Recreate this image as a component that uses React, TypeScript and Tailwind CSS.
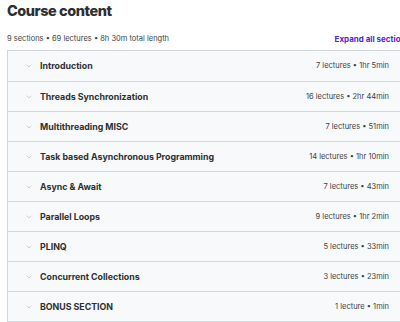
import { ChevronDown } from 'lucide-react';

const sections = [
  { title: 'Introduction', meta: '7 lectures • 1hr 5min' },
  { title: 'Threads Synchronization', meta: '16 lectures • 2hr 44min' },
  { title: 'Multithreading MISC', meta: '7 lectures • 51min' },
  { title: 'Task based Asynchronous Programming', meta: '14 lectures • 1hr 10min' },
  { title: 'Async & Await', meta: '7 lectures • 43min' },
  { title: 'Parallel Loops', meta: '9 lectures • 1hr 2min' },
  { title: 'PLINQ', meta: '5 lectures • 33min' },
  { title: 'Concurrent Collections', meta: '3 lectures • 23min' },
  { title: 'BONUS SECTION', meta: '1 lecture • 1min' },
];

export default function App() {
  return (
    <div className="w-[400px] h-[322px] overflow-hidden bg-white text-[#2d2f31]" style={{ fontFamily: 'Inter, "Liberation Sans", sans-serif' }}>
      <div className="w-[403px] ml-[7px]">
        <h2 className="text-[14.5px] font-extrabold leading-[20px] pt-[1px] tracking-[-0.45px]">Course content</h2>
        <div className="flex items-center justify-between mt-[11px] h-[14px]">
          <span className="text-[7.5px] text-[#3e4143]">9 sections • 69 lectures • 8h 30m total length</span>
          <span className="text-[8px] font-bold text-[#5624d0]">Expand all sections</span>
        </div>
        <div className="mt-[4px] border border-[#d1d7dc] border-r-0">
          {sections.map((s, i) => (
            <div
              key={s.title}
              className={`flex items-center h-[30px] bg-[#f7f9fa] pl-[17px] pr-[21px] ${i > 0 ? 'border-t border-[#d1d7dc]' : ''}`}
            >
              <ChevronDown size={8} strokeWidth={1.5} className="text-[#a3a8ad] shrink-0" />
              <span className="ml-[7px] text-[8.8px] font-bold">{s.title}</span>
              <span className="ml-auto text-[7.5px] text-[#3e4143]">{s.meta}</span>
            </div>
          ))}
        </div>
      </div>
    </div>
  );
}
